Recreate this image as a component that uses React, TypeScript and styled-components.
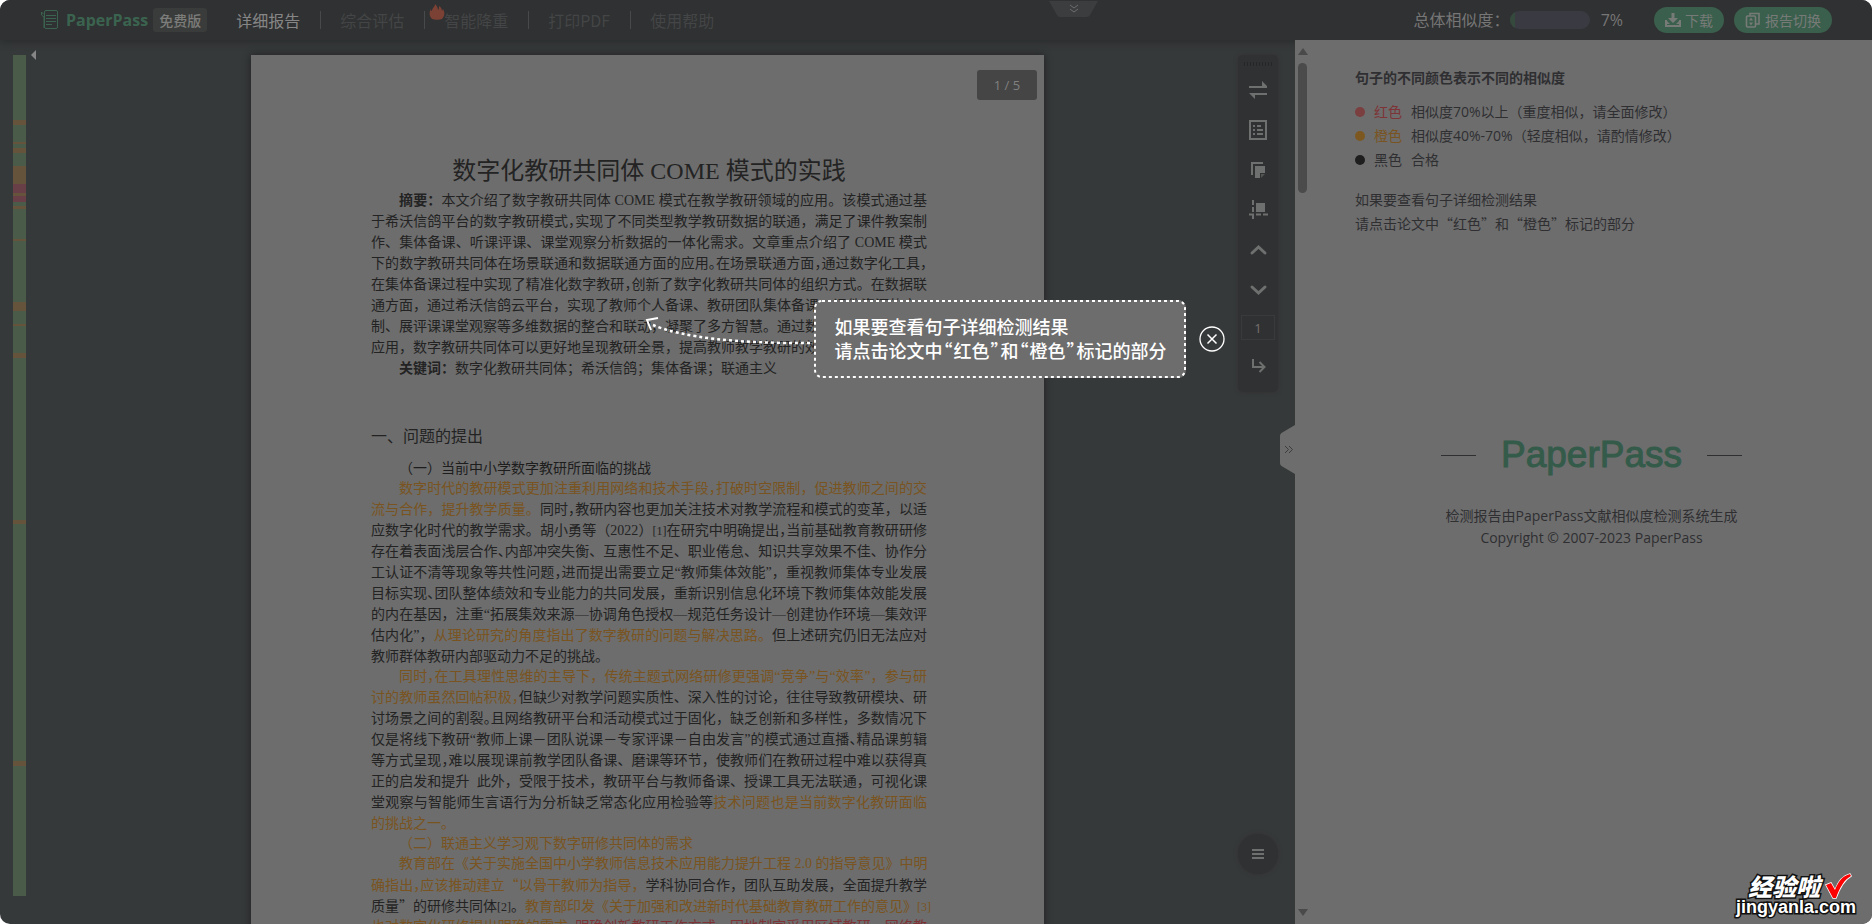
import React from "react";
import styled, { createGlobalStyle } from "styled-components";

const UI_FONT = `"Open Sans", "Noto Sans CJK SC", sans-serif`;
const CJK_FONT = `"Noto Sans CJK SC", sans-serif`;
const DOC_FONT = `"Liberation Serif", "Noto Sans CJK SC", serif`;

const color = {
  bar: "#303132",
  canvas: "#36393a",
  paper: "#6d6d6d",
  ink: "#232323",
  orange: "#7a5420",
  red: "#7e3336",
  green: "#3b5f4d",
  icon: "#6e6f6f",
  panelText: "#2f2f32",
};

const GlobalStyle = createGlobalStyle`
  * { box-sizing: border-box; }
  body { margin: 0; background: #fff; font-family: ${UI_FONT}; overflow: hidden; }
  h1, h2, h3, p, ul { margin: 0; padding: 0; font-weight: normal; }
  button { font: inherit; border: 0; padding: 0; background: none; cursor: pointer; }
  a { color: inherit; text-decoration: none; }
`;

const Shell = styled.div`
  display: flex;
  flex-direction: column;
  height: 100vh;
  border-radius: 10px;
  overflow: hidden;
  background: ${color.canvas};
`;

/* ---------- header ---------- */

const Header = styled.header`
  position: relative;
  z-index: 2;
  flex: none;
  display: flex;
  align-items: center;
  height: 40px;
  padding: 0 40px;
  background: ${color.bar};
  box-shadow: 0 2px 8px rgba(0, 0, 0, 0.25);
`;

const Brand = styled.a`
  display: flex;
  align-items: center;
  gap: 7px;
  color: #3b6450;
  font: bold 16px/24px "Open Sans", sans-serif;
`;

const Badge = styled.span`
  margin-left: 5px;
  padding: 0 6px;
  border-radius: 3px;
  background: #3a3c3b;
  color: #7c7c7a;
  font: 500 14px/24px ${CJK_FONT};
`;

const Nav = styled.nav`
  display: flex;
  align-items: center;
  margin-left: 10px;
`;

const NavLink = styled.a<{ $active?: boolean }>`
  position: relative;
  padding: 0 20px 0 19px;
  color: ${(p) => (p.$active ? "#868686" : "#434546")};
  font: 16px/18px ${CJK_FONT};

  & + & {
    border-left: 1px solid #47494a;
  }
`;

const Flame = styled.svg`
  position: absolute;
  left: 4px;
  top: -7px;
`;

const CollapseTab = styled.button`
  position: absolute;
  left: calc(50% + 113px);
  top: 0;
  width: 49px;
  height: 16px;
`;

const HeaderTools = styled.div`
  display: flex;
  align-items: center;
  margin-left: auto;
  color: #767676;
  font-size: 16px;
  line-height: 24px;
`;

const Meter = styled.div`
  width: 80px;
  height: 18px;
  margin-right: 11px;
  border-radius: 9px;
  background: #393a42;
  overflow: hidden;
`;

const MeterFill = styled.div`
  height: 100%;
  background: #35493c;
`;

const Pill = styled.button`
  display: flex;
  align-items: center;
  gap: 4px;
  height: 26px;
  padding: 0 11px;
  border-radius: 13px;
  background: ${color.green};
  color: #777b78;

  && {
    font: 14px/26px ${CJK_FONT};
  }
  & + & {
    margin-left: 10px;
  }
`;

const PillGroup = styled.div`
  display: flex;
  margin-left: 31px;
`;

/* ---------- document area ---------- */

const Main = styled.main`
  flex: 1;
  min-height: 0;
  display: flex;
`;

const Canvas = styled.section`
  position: relative;
  flex: 1;
  min-width: 0;
  display: flex;
  justify-content: center;
  padding-top: 15px;
  overflow: hidden;
`;

const Strip = styled.div`
  position: absolute;
  left: 13px;
  top: 15px;
  bottom: 28px;
  width: 13px;
  display: flex;
  flex-direction: column;
`;

const segmentColors = { g: "#4a5c49", o: "#65533c", r: "#693f47" };

const Segment = styled.div<{ $kind: keyof typeof segmentColors; $span: number }>`
  flex: ${(p) => p.$span} 0 0;
  background: ${(p) => segmentColors[p.$kind]};
`;

const StripMarker = styled.div`
  position: absolute;
  left: 31px;
  top: 10px;
  border: 5px solid transparent;
  border-left: 0;
  border-right-color: #868686;
`;

const Paper = styled.article`
  position: relative;
  flex: 0 0 793px;
  min-width: 0;
  min-height: 1120px;
  padding: 100px 117px 0 120px;
  background: ${color.paper};
  box-shadow: 0 0 8px rgba(0, 0, 0, 0.45);
  color: ${color.ink};
  font: 14px/21px ${DOC_FONT};
`;

const PageCount = styled.div`
  position: absolute;
  right: 7px;
  top: 15px;
  width: 60px;
  border-radius: 3px;
  background: #454545;
  color: #808080;
  text-align: center;
  font: 13px/30px "Open Sans", sans-serif;
`;

const Title = styled.h1`
  margin-bottom: 3px;
  font-size: 24px;
  line-height: 32px;
  text-align: center;
`;

const Chapter = styled.h2`
  margin: 46px 0 9px;
  font-size: 16px;
  line-height: 24px;
`;

const Subhead = styled.h3<{ $orange?: boolean }>`
  margin-bottom: -1px;
  padding-left: 28px;
  font-size: 14px;
  color: ${(p) => (p.$orange ? color.orange : "#1d1d1d")};
`;

const Paragraph = styled.p`
  margin-bottom: -1px;
`;

const Line = styled.span<{ $indent?: boolean; $ragged?: boolean }>`
  display: block;
  height: 21px;
  padding-left: ${(p) => (p.$indent ? "28px" : "0")};
  white-space: nowrap;
  text-align: justify;
  text-align-last: ${(p) => (p.$ragged ? "left" : "justify")};
`;

const Mark = styled.span<{ $red?: boolean }>`
  color: ${(p) => (p.$red ? color.red : color.orange)};
`;

/* half-width setting for full-width punctuation */
const Half = styled.span`
  font-feature-settings: "halt";
`;

const Wide = styled.span`
  font-family: ${CJK_FONT};
`;

const Ref = styled.span`
  font-size: 12px;
`;

/* ---------- floating tools ---------- */

const ToolRail = styled.aside`
  position: absolute;
  right: 17px;
  top: 15px;
  width: 40px;
  display: flex;
  flex-direction: column;
  align-items: center;
  padding-bottom: 6px;
  border-radius: 5px;
  background: ${color.bar};
  box-shadow: 0 0 4px rgba(48, 44, 44, 0.6);
`;

const Grip = styled.div`
  width: 29px;
  height: 4px;
  margin: 7px 0 4px;
  background: repeating-linear-gradient(90deg, #252627 0 1px, transparent 1px 3px);
`;

const RailButton = styled.button`
  display: flex;
  align-items: center;
  justify-content: center;
  width: 40px;
  height: 40px;
  color: ${color.icon};
`;

const PageInput = styled.input`
  width: 34px;
  height: 25px;
  margin: 5px 0 6px;
  padding: 0;
  border: 1px solid #393a3b;
  background: transparent;
  color: #767070;
  text-align: center;
  font: 13px/20px "Open Sans", sans-serif;
`;

const MenuButton = styled.button`
  position: absolute;
  right: 17px;
  bottom: 50px;
  display: flex;
  align-items: center;
  justify-content: center;
  width: 40px;
  height: 40px;
  border-radius: 50%;
  background: ${color.bar};
  box-shadow: 0 0 4px rgba(48, 44, 44, 0.6);
  color: ${color.icon};
`;

const PanelHandle = styled.button`
  position: absolute;
  right: 0;
  top: 385px;
  width: 15px;
  height: 49px;
`;

/* ---------- guide ---------- */

const Guide = styled.div`
  position: absolute;
  z-index: 3;
  left: calc(50% - 5px);
  top: 260px;
  display: flex;
  align-items: center;
  color: #fff;
`;

const GuideBox = styled.div`
  position: relative;
  flex: none;
  width: 372px;
  height: 78px;
  padding: 14px 0 0 21px;
  border-radius: 8px;
  background: ${color.paper};
  white-space: nowrap;
  font: 500 18px/24px ${CJK_FONT};
`;

const GuideQuote = styled.span`
  padding: 0 1px;
  font-feature-settings: "halt";
`;

const GuideFrame = styled.svg`
  position: absolute;
  left: 0;
  top: 0;
`;

const GuideClose = styled.button`
  display: flex;
  margin-left: 13px;
  color: #fff;
`;

/* ---------- result panel ---------- */

const Panel = styled.aside`
  position: relative;
  z-index: 3;
  flex: 0 0 577px;
  display: flex;
  background: ${color.paper};
  color: ${color.panelText};
`;

const ScrollTrack = styled.div`
  flex: 0 0 16px;
  display: flex;
  flex-direction: column;
  align-items: center;
  padding: 8px 1px 8px 0;
`;

const ScrollArrow = styled.div<{ $down?: boolean }>`
  border: 5px solid transparent;
  ${(p) =>
    p.$down
      ? "margin-top: auto; border-bottom: 0; border-top: 7px solid #4a4a4a;"
      : "border-top: 0; border-bottom: 7px solid #4a4a4a;"}
`;

const ScrollThumb = styled.div`
  width: 9px;
  height: 130px;
  margin-top: 8px;
  border-radius: 5px;
  background: #4b4b4b;
`;

const PanelBody = styled.div`
  flex: 1;
  padding: 26px 0 0 44px;
  font-size: 14px;
  line-height: 24px;
`;

const LegendTitle = styled.h2`
  margin-bottom: 10px;
  font-size: 14px;
  font-weight: bold;
`;

const Legend = styled.ul`
  margin-bottom: 15px;
  list-style: none;
`;

const LegendItem = styled.li<{ $dot: string; $label: string }>`
  display: flex;
  align-items: center;
  gap: 9px;

  &::before {
    content: "";
    width: 10px;
    height: 10px;
    border-radius: 50%;
    background: ${(p) => p.$dot};
  }
  b {
    font-weight: normal;
    color: ${(p) => p.$label};
  }
`;

const Hint = styled.p`
  font-family: ${CJK_FONT};
`;

const Footer = styled.footer`
  margin: 195px 0 0 -44px;
  text-align: center;
  line-height: 22px;
`;

const FooterBrand = styled.div`
  display: flex;
  align-items: center;
  justify-content: center;
  gap: 25px;
  margin-bottom: 25px;
  color: #345b4a;
  font: 37px/50px "Liberation Sans", sans-serif;
  -webkit-text-stroke: 1px #345b4a;

  &::before,
  &::after {
    content: "";
    width: 35px;
    height: 1px;
    background: #2f2f32;
  }
`;

/* ---------- site stamp ---------- */

const Stamp = styled.div`
  position: absolute;
  z-index: 4;
  right: 16px;
  bottom: 7px;
  display: flex;
  flex-direction: column;
  align-items: flex-end;
  color: #fff;
  -webkit-text-stroke: 3px #111;
  paint-order: stroke fill;
  font: bold 18px/20px "Liberation Sans", sans-serif;
`;

const StampTop = styled.div`
  display: flex;
  align-items: center;
  gap: 4px;
  margin-bottom: -2px;
  padding-right: 4px;
  font: italic 900 24px/26px ${CJK_FONT};
`;

const segments: Array<[keyof typeof segmentColors, number]> = [
  ["g", 65], ["o", 5], ["g", 17], ["o", 2], ["g", 4], ["o", 5], ["g", 13], ["o", 18],
  ["r", 9], ["o", 3], ["r", 6], ["g", 4], ["o", 3], ["g", 30], ["o", 2], ["g", 61],
  ["o", 9], ["g", 13], ["o", 2], ["g", 27], ["o", 5], ["g", 162], ["o", 4], ["g", 237],
  ["o", 5], ["g", 130],
];

const LogoIcon = () => (
  <svg width="19" height="20" viewBox="0 0 19 20" fill="none" stroke="#3b6450" strokeWidth="1">
    <rect x="4.500" y="0.500" width="13" height="18" rx="1.500" />
    <path d="M6 5.500h10M6 8.500h10M6 11.500h10M6 14.500h6" />
    <path d="M4 18V7L1.500 5V2L4 4.500" />
  </svg>
);

const DownloadIcon = () => (
  <svg width="16" height="16" viewBox="0 0 16 16" fill="currentColor">
    <path d="M6.500 1h3v5H13L8 11 3 6h3.500z" />
    <path d="M0 8h2v5h12V8h2v7H0z" />
    <path d="M2 9l3 3H2zM14 9l-3 3h3z" />
  </svg>
);

const SwitchIcon = () => (
  <svg width="16" height="16" viewBox="0 0 16 16" fill="none" stroke="currentColor" strokeWidth="1.600">
    <rect x="1.500" y="4" width="9" height="11" rx="1" />
    <path d="M5 3.500V1.500h9v10.500h-3" />
    <path d="M6 5.500l2 3H4zM6 13.500l2-3H4z" fill="currentColor" stroke="none" />
  </svg>
);

const iconPaths: Record<string, React.ReactNode> = {
  swap: (
    <path d="M1 6h13V1l5 5v2H1zM19 13v2H7v4l-6-6z" fill="currentColor" />
  ),
  list: (
    <>
      <rect x="2" y="1" width="16" height="18" fill="none" stroke="currentColor" strokeWidth="2" />
      <path d="M5 5h2v2H5zM9 5h4v2H9zM5 9h2v2H5zM9 9h6v2H9zM5 13h2v2H5zM9 13h6v2H9z" fill="currentColor" />
    </>
  ),
  copy: (
    <>
      <path d="M3 15V2h12v2H5v11z" fill="currentColor" />
      <path d="M7 6h10v7h-5v5H7z" fill="currentColor" />
      <path d="M13 14h4l-4 4z" fill="#525353" />
    </>
  ),
  crop: (
    <>
      <rect x="8" y="3" width="9" height="9" fill="currentColor" />
      <path d="M5 0v5M5 7v5M5 15v4M1 14.500h5M8 14.500h5M15 14.500h5" stroke="currentColor" strokeWidth="2" />
    </>
  ),
  up: <path d="M4 13l6.500-6 6.500 6" fill="none" stroke="currentColor" strokeWidth="3" strokeLinecap="round" />,
  down: <path d="M4 7l6.500 6 6.500-6" fill="none" stroke="currentColor" strokeWidth="3" strokeLinecap="round" />,
  enter: (
    <path d="M5 3v8h11M11.500 6l5 5-5 5" fill="none" stroke="currentColor" strokeWidth="2" />
  ),
};

const RailIcon = ({ name }: { name: string }) => (
  <svg width="20" height="20" viewBox="0 0 20 20">
    {iconPaths[name]}
  </svg>
);

const tools = [
  ["swap", "切换"],
  ["list", "目录"],
  ["copy", "复制"],
  ["crop", "截图"],
  ["up", "上一页"],
  ["down", "下一页"],
];

const TopBar = () => (
  <Header>
    <Brand href="#home">
      <LogoIcon />
      PaperPass
    </Brand>
    <Badge>免费版</Badge>
    <Nav>
      <NavLink href="#detail" $active>详细报告</NavLink>
      <NavLink href="#summary">综合评估</NavLink>
      <NavLink href="#reduce">
        <Flame width="17" height="16" viewBox="0 0 17 16">
          <path
            d="M6 0c2 2 3 4 3 6 1-1 1-2 1-4 2 1 3 3 3 5l1-2c2 3 2 7-1 10-2 1-8 1-10 0-3-3-3-7-1-10 0 1 0 2 1 2C3 4 6 3 6 0z"
            fill="#7a4134"
          />
        </Flame>
        智能降重
      </NavLink>
      <NavLink href="#print">打印PDF</NavLink>
      <NavLink href="#help">使用帮助</NavLink>
    </Nav>
    <CollapseTab aria-label="收起">
      <svg width="49" height="16" viewBox="0 0 49 16">
        <path d="M0 0h49l-8 14q-1 2-3 2H11q-2 0-3-2z" fill="#3b3d3e" />
        <path d="M21 4l4 3 4-3M21 8l4 3 4-3" fill="none" stroke="#6c6d6e" />
      </svg>
    </CollapseTab>
    <HeaderTools>
      <span>总体相似度：</span>
      <Meter role="meter" aria-label="总体相似度" aria-valuenow={7}>
        <MeterFill style={{ width: "7%" }} />
      </Meter>
      <span>7%</span>
      <PillGroup>
        <Pill>
          <DownloadIcon />
          下载
        </Pill>
        <Pill>
          <SwitchIcon />
          报告切换
        </Pill>
      </PillGroup>
    </HeaderTools>
  </Header>
);

const Document = () => (
  <Paper>
    <PageCount>1 / 5</PageCount>
    <Title>数字化教研共同体 COME 模式的实践</Title>
    <p>
      <Line $indent><b>摘要：</b>本文介绍了数字教研共同体 COME 模式在教学教研领域的应用。该模式通过基</Line>
      <Line>于希沃信鸽平台的数字教研模式<Half>，</Half>实现了不同类型教学教研数据的联通，满足了课件教案制</Line>
      <Line>作、集体备课、听课评课、课堂观察分析数据的一体化需求。文章重点介绍了 COME 模式</Line>
      <Line>下的数字教研共同体在场景联通和数据联通方面的应用<Half>。</Half>在场景联通方面<Half>，</Half>通过数字化工具<Half>，</Half></Line>
      <Line>在集体备课过程中实现了精准化数字教研<Half>，</Half>创新了数字化教研共同体的组织方式。在数据联</Line>
      <Line $ragged>通方面，通过希沃信鸽云平台，实现了教师个人备课、教研团队集体备课、课件资源的定</Line>
      <Line $ragged>制、展评课课堂观察等多维数据的整合和联动，凝聚了多方智慧。通过数字化工具的创新</Line>
      <Line $ragged>应用，数字教研共同体可以更好地呈现教研全景，提高教师教学教研的效率与质量。</Line>
      <Line $indent $ragged><b>关键词：</b>数字化教研共同体；希沃信鸽；集体备课；联通主义</Line>
    </p>

    <Chapter>一、问题的提出</Chapter>
    <Subhead>（一）当前中小学数字教研所面临的挑战</Subhead>
    <Paragraph>
      <Line $indent><Mark>数字时代的教研模式更加注重利用网络和技术手段<Half>，</Half>打破时空限制，促进教师之间的交</Mark></Line>
      <Line><Mark>流与合作，提升教学质量。</Mark>同时<Half>，</Half>教研内容也更加关注技术对教学流程和模式的变革，以适</Line>
      <Line>应数字化时代的教学需求。胡小勇等（2022）<Ref>[1]</Ref>在研究中明确提出<Half>，</Half>当前基础教育教研研修</Line>
      <Line>存在着表面浅层合作<Half>、</Half>内部冲突失衡、互惠性不足、职业倦怠、知识共享效果不佳、协作分</Line>
      <Line>工认证不清等现象等共性问题<Half>，</Half>进而提出需要立足“教师集体效能”，重视教师集体专业发展</Line>
      <Line>目标实现<Half>、</Half>团队整体绩效和专业能力的共同发展，重新识别信息化环境下教师集体效能发展</Line>
      <Line>的内在基因，注重“拓展集效来源—协调角色授权—规范任务设计—创建协作环境—集效评</Line>
      <Line>估内化”，<Mark>从理论研究的角度指出了数字教研的问题与解决思路。</Mark>但上述研究仍旧无法应对</Line>
      <Line $ragged>教师群体教研内部驱动力不足的挑战。</Line>
    </Paragraph>
    <Paragraph>
      <Line $indent><Mark>同时<Half>，</Half>在工具理性思维的主导下，传统主题式网络研修更强调“竞争”与“效率”，参与研</Mark></Line>
      <Line><Mark>讨的教师虽然回帖积极<Half>，</Half></Mark>但缺少对教学问题实质性、深入性的讨论，往往导致教研模块、研</Line>
      <Line>讨场景之间的割裂<Half>。</Half>且网络教研平台和活动模式过于固化，缺乏创新和多样性，多数情况下</Line>
      <Line>仅是将线下教研“教师上课－团队说课－专家评课－自由发言”的模式通过直播<Half>、</Half>精品课剪辑</Line>
      <Line>等方式呈现<Half>，</Half>难以展现课前教学团队备课、磨课等环节，使教师们在教研过程中难以获得真</Line>
      <Line>正的启发和提升{"\u00a0 "}此外，受限于技术，教研平台与教师备课、授课工具无法联通，可视化课</Line>
      <Line>堂观察与智能师生言语行为分析缺乏常态化应用检验等<Mark>技术问题也是当前数字化教研面临</Mark></Line>
      <Line $ragged><Mark>的挑战之一。</Mark></Line>
    </Paragraph>
    <Subhead $orange>（二）联通主义学习观下数字研修共同体的需求</Subhead>
    <Paragraph>
      <Line $indent><Mark>教育部在《关于实施全国中小学教师信息技术应用能力提升工程 2.0 的指导意见》中明</Mark></Line>
      <Line><Mark>确指出<Half>，</Half>应该推动建立<Wide>“</Wide>以骨干教师为指导，</Mark>学科协同合作，团队互助发展，全面提升教学</Line>
      <Line>质量<Wide>”</Wide>的研修共同体<Ref>[2]</Ref>。<Mark>教育部印发《关于加强和改进新时代基础教育教研工作的意见》<Ref>[3]</Ref></Mark></Line>
      <Line><Mark>也对数字化研修提出明确的需求<Half>。</Half></Mark><Mark $red>明确创新教研工作方式，因地制宜采用区域教研、网络教</Mark></Line>
    </Paragraph>
  </Paper>
);

const GuideHint = () => (
  <Guide>
    <svg width="171" height="78" viewBox="0 0 171 78" fill="none" stroke="#fff" strokeWidth="2.500">
      <path d="M10 25Q56 44 170 43" strokeDasharray="3 3" />
      <path d="M15 18L4 20l4 10" strokeWidth="2" />
    </svg>
    <GuideBox>
      <GuideFrame width="372" height="78" fill="none" stroke="#fff" strokeWidth="2">
        <rect x="1" y="1" width="370" height="76" rx="7" strokeDasharray="3 3" />
      </GuideFrame>
      如果要查看句子详细检测结果
      <br />
      请点击论文中<GuideQuote>“</GuideQuote>红色<GuideQuote>”</GuideQuote>和
      <GuideQuote>“</GuideQuote>橙色<GuideQuote>”</GuideQuote>标记的部分
    </GuideBox>
    <GuideClose aria-label="关闭">
      <svg width="26" height="26" viewBox="0 0 26 26" fill="none" stroke="currentColor">
        <circle cx="13" cy="13" r="12" strokeWidth="1.300" />
        <path d="M8.500 8.500l9 9M17.500 8.500l-9 9" strokeWidth="1.500" />
      </svg>
    </GuideClose>
  </Guide>
);

export default function App() {
  return (
    <>
      <GlobalStyle />
      <Shell>
        <TopBar />
        <Main>
          <Canvas>
            <Strip>
              {segments.map(([kind, span], i) => (
                <Segment key={i} $kind={kind} $span={span} />
              ))}
            </Strip>
            <StripMarker />
            <Document />
            <ToolRail>
              <Grip />
              {tools.map(([name, label]) => (
                <RailButton key={name} aria-label={label}>
                  <RailIcon name={name} />
                </RailButton>
              ))}
              <PageInput aria-label="页码" defaultValue="1" />
              <RailButton aria-label="跳转">
                <RailIcon name="enter" />
              </RailButton>
            </ToolRail>
            <MenuButton aria-label="菜单">
              <svg width="12" height="10" viewBox="0 0 12 10" fill="currentColor">
                <path d="M0 0h12v2H0zM0 4h12v2H0zM0 8h12v2H0z" />
              </svg>
            </MenuButton>
            <PanelHandle aria-label="收起侧栏">
              <svg width="15" height="49" viewBox="0 0 15 49">
                <path d="M15 0v49L1.500 41Q0 40 0 38V11Q0 9 1.500 8z" fill={color.paper} />
                <path d="M5 21l3.500 3.500L5 28M9 21l3.500 3.500L9 28" fill="none" stroke="#3c3c3c" />
              </svg>
            </PanelHandle>
            <GuideHint />
          </Canvas>
          <Panel>
            <ScrollTrack>
              <ScrollArrow />
              <ScrollThumb />
              <ScrollArrow $down />
            </ScrollTrack>
            <PanelBody>
              <LegendTitle>句子的不同颜色表示不同的相似度</LegendTitle>
              <Legend>
                <LegendItem $dot="#7b3f3f" $label={color.red}>
                  <b>红色</b>相似度70%以上（重度相似，请全面修改）
                </LegendItem>
                <LegendItem $dot="#7c5820" $label={color.orange}>
                  <b>橙色</b>相似度40%-70%（轻度相似，请酌情修改）
                </LegendItem>
                <LegendItem $dot="#1e1e1e" $label={color.panelText}>
                  <b>黑色</b>合格
                </LegendItem>
              </Legend>
              <Hint>如果要查看句子详细检测结果</Hint>
              <Hint>请点击论文中“红色”和“橙色”标记的部分</Hint>
              <Footer>
                <FooterBrand>PaperPass</FooterBrand>
                <p>检测报告由PaperPass文献相似度检测系统生成</p>
                <p>Copyright © 2007-2023 PaperPass</p>
              </Footer>
            </PanelBody>
          </Panel>
        </Main>
      </Shell>
      <Stamp>
        <StampTop>
          经验啦
          <svg width="28" height="26" viewBox="0 0 28 26">
            <path
              d="M2 12l5-2 4 7C14 9 18 3 26 1l1 2C20 7 16 14 12 25H9z"
              fill="#f00"
              stroke="#fff"
              strokeWidth="1.500"
            />
          </svg>
        </StampTop>
        jingyanla.com
      </Stamp>
    </>
  );
}
